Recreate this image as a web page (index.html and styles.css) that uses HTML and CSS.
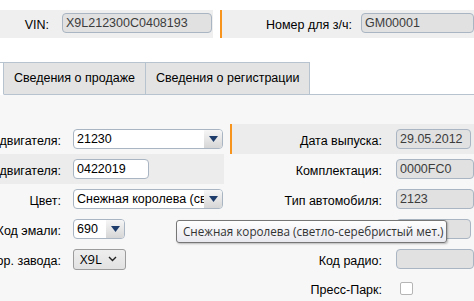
FILE: index.html
```html
<!DOCTYPE html>
<html lang="ru">
<head>
    <meta charset="UTF-8">
    <title>Карточка автомобиля</title>
    <link rel="stylesheet" href="styles.css">
</head>
<body>

    <div class="topbar">
        <div class="top-left">
            <span class="top-label vin-label">VIN:</span>
            <input class="field ro vin" type="text" value="X9L212300C0408193" readonly>
        </div>
        <div class="top-right">
            <span class="top-label part-label">Номер для з/ч:</span>
            <input class="field ro part" type="text" value="GM00001" readonly>
        </div>
    </div>

    <div class="tabs">
        <div class="tab tab-active"></div>
        <div class="tab">Сведения о продаже</div>
        <div class="tab">Сведения о регистрации</div>
        <div class="tab-rest"></div>
    </div>

    <div class="panel">
        <div class="col-left">
            <div class="row">
                <span class="label"><span>Модель двигателя:</span></span>
                <div class="combo combo-wide">
                    <span class="combo-text">21230</span>
                    <span class="combo-btn"><svg width="9" height="6" viewBox="0 0 9 6"><path d="M0 0h9L4.5 6z" fill="#1f3d6b"/></svg></span>
                </div>
            </div>
            <div class="row stripe">
                <span class="label"><span>Номер двигателя:</span></span>
                <input class="field edit engine" type="text" value="0422019">
            </div>
            <div class="row">
                <span class="label"><span>Цвет:</span></span>
                <div class="combo combo-wide">
                    <span class="combo-text">Снежная королева (светло-серебристый мет.)</span>
                    <span class="combo-btn"><svg width="9" height="6" viewBox="0 0 9 6"><path d="M0 0h9L4.5 6z" fill="#1f3d6b"/></svg></span>
                </div>
            </div>
            <div class="row">
                <span class="label"><span>Код эмали:</span></span>
                <div class="combo combo-small">
                    <span class="combo-text">690</span>
                    <span class="combo-btn"><svg width="9" height="6" viewBox="0 0 9 6"><path d="M0 0h9L4.5 6z" fill="#1f3d6b"/></svg></span>
                </div>
            </div>
            <div class="row">
                <span class="label"><span>Код кор. завода:</span></span>
                <div class="native-select">
                    <span>X9L</span>
                    <svg width="9" height="6" viewBox="0 0 9 6"><path d="M1 1l3.5 3.5L8 1" fill="none" stroke="#222" stroke-width="1.4"/></svg>
                </div>
            </div>
        </div>

        <div class="col-right">
            <div class="row stripe marked">
                <span class="label">Дата выпуска:</span>
                <input class="field ro short" type="text" value="29.05.2012" readonly>
            </div>
            <div class="row">
                <span class="label">Комплектация:</span>
                <input class="field ro long" type="text" value="0000FC0" readonly>
            </div>
            <div class="row">
                <span class="label">Тип автомобиля:</span>
                <input class="field ro long" type="text" value="2123" readonly>
            </div>
            <div class="row">
                <span class="label"></span>
                <input class="field ro short" type="text" value="" readonly>
            </div>
            <div class="row">
                <span class="label">Код радио:</span>
                <input class="field ro long" type="text" value="" readonly>
            </div>
            <div class="row last">
                <span class="label">Пресс-Парк:</span>
                <span class="check"></span>
            </div>
        </div>

        <div class="tooltip">Снежная королева (светло-серебристый мет.)</div>
    </div>

</body>
</html>
```

FILE: styles.css
```css
body {
    margin: 0;
    padding: 0;
    background-color: #fff;
    font-family: 'Liberation Sans', Arial, sans-serif;
    font-size: 12.5px;
    color: #000;
    overflow: hidden;
}
.topbar {
    display: flex;
    margin-top: 10px;
    height: 28px;
}
.top-left {
    width: 213px;
    display: flex;
    align-items: flex-start;
    padding-top: 3px;
    background-color: #efefef;
    box-sizing: border-box;
}
.top-right {
    flex: 1;
    display: flex;
    align-items: flex-start;
    padding-top: 3px;
    margin-left: 7px;
    border-left: 2px solid #f7941d;
    background-color: #efefef;
    box-sizing: border-box;
}
.top-label {
    text-align: right;
    padding-top: 5px;
}
.vin-label {
    width: 49px;
    margin-right: 13px;
}
.part-label {
    width: 130px;
    margin-right: 9px;
}
.field {
    font-family: 'Liberation Sans', Arial, sans-serif;
    font-size: 12.5px;
    height: 20px;
    box-sizing: border-box;
    border: 1px solid #a9b5c2;
    border-radius: 4px;
    padding: 0 3px;
    margin: 0;
    outline: none;
}
.ro {
    background-color: #e1e1e1;
    color: #3c3c3c;
}
.edit {
    background-color: #fff;
    color: #000;
}
.vin {
    width: 150px;
}
.part {
    width: 113px;
}
.tabs {
    display: flex;
    margin-top: 24px;
    height: 33px;
}
.tab {
    box-sizing: border-box;
    height: 33px;
    padding: 0 10px;
    line-height: 31px;
    background-color: #e3e3e3;
    border: 1px solid #b7c3cf;
    border-left: none;
    white-space: nowrap;
}
.tab-active {
    width: 4px;
    padding: 0;
    background-color: #fff;
    border-bottom-color: #fff;
}
.tab-rest {
    flex: 1;
    border-bottom: 1px solid #b7c3cf;
}
.panel {
    position: relative;
    display: flex;
    background-color: #f7f7f7;
    padding-top: 29px;
    height: 177px;
}
.col-left {
    width: 224px;
    margin-right: 6px;
}
.col-right {
    flex: 1;
}
.row {
    height: 30px;
    display: flex;
    align-items: center;
}
.row.last {
    height: 28px;
}
.stripe {
    background-color: #ececec;
}
.col-left .label {
    width: 61px;
    min-width: 0;
    flex-shrink: 0;
    margin-right: 12px;
    display: flex;
    justify-content: flex-end;
    white-space: nowrap;
    padding-top: 4px;
}
.col-left .label span {
    flex-shrink: 0;
}
.col-right .row {
    border-left: 2px solid transparent;
}
.col-right .marked {
    border-left-color: #f7941d;
}
.col-right .label {
    flex: 0 0 150px;
    margin-right: 14px;
    text-align: right;
    white-space: nowrap;
    padding-top: 4px;
}
.engine {
    width: 76px;
}
.short {
    width: 75px;
}
.long {
    width: 78px;
}
.combo {
    display: flex;
    height: 20px;
    box-sizing: border-box;
    border: 1px solid #a9b5c2;
    border-radius: 4px;
    background-color: #fff;
    overflow: hidden;
}
.combo-wide {
    width: 150px;
}
.combo-small {
    width: 52px;
}
.combo-text {
    flex: 1;
    padding: 0 3px;
    line-height: 18px;
    white-space: nowrap;
    overflow: hidden;
}
.combo-btn {
    flex: 0 0 18px;
    display: flex;
    align-items: center;
    justify-content: center;
    background: linear-gradient(#f6f6f6, #d6d6d6);
}
.native-select {
    display: flex;
    align-items: center;
    justify-content: space-between;
    width: 53px;
    height: 21px;
    box-sizing: border-box;
    padding: 0 8px 0 6px;
    border: 1px solid #9c9c9c;
    border-radius: 3px;
    background: linear-gradient(#eeeeee, #e2e2e2);
    font-family: 'Open Sans', sans-serif;
    font-size: 13px;
}
.check {
    width: 13px;
    height: 13px;
    margin-left: 4px;
    box-sizing: border-box;
    border: 1px solid #b5b5b5;
    border-radius: 2px;
    background-color: #fff;
}
.tooltip {
    position: absolute;
    left: 176px;
    top: 125px;
    width: 271px;
    height: 23px;
    box-sizing: border-box;
    padding: 0 6px;
    line-height: 21px;
    border: 1px solid #767676;
    border-radius: 3px;
    background: linear-gradient(#ffffff, #e8e8ef);
    box-shadow: 1px 1px 2px rgba(0, 0, 0, 0.25);
    font-family: 'Open Sans', sans-serif;
    font-size: 11.7px;
    color: #333;
    white-space: nowrap;
}
```
